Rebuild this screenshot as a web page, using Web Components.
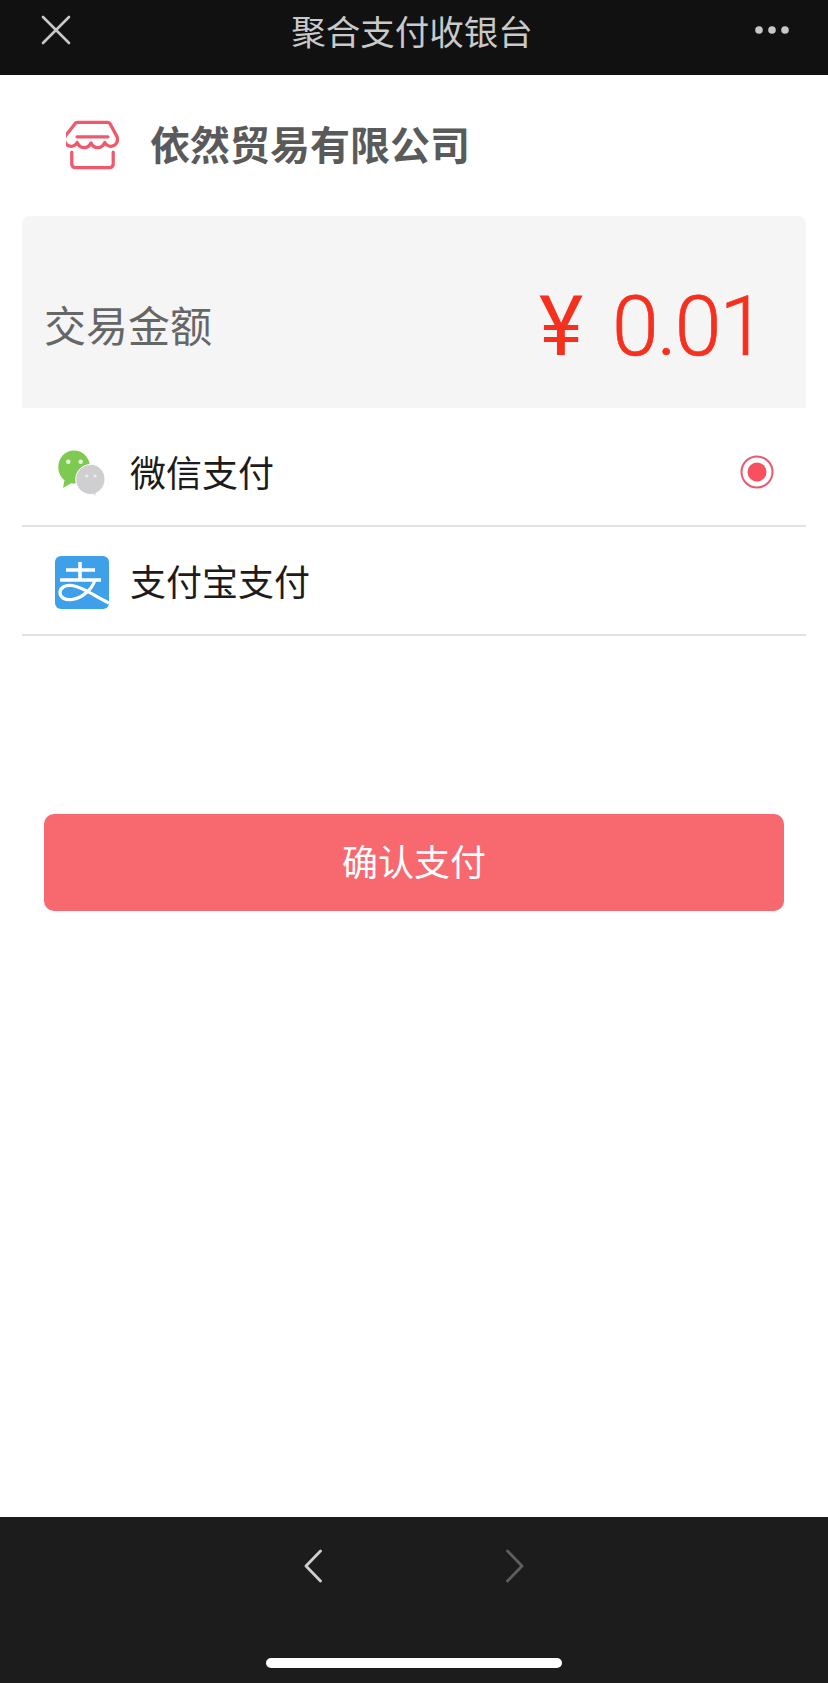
<!DOCTYPE html>
<html lang="zh">
<head>
<meta charset="utf-8">
<title>聚合支付收银台</title>
<style>
html, body {
    margin: 0;
    padding: 0;
    background: #fff;
}
body {
    font-family: "Noto Sans CJK SC", "Noto Sans", sans-serif;
}
.page {
    display: flex;
    flex-direction: column;
    height: 1683px;
}
</style>
</head>
<body>
<div class="page">
    <pay-titlebar>聚合支付收银台</pay-titlebar>
    <pay-merchant>依然贸易有限公司</pay-merchant>
    <pay-amount label="交易金额" value="0.01"></pay-amount>
    <pay-method selected>
        <svg slot="icon" width="48" height="48" viewBox="0 0 48 48">
            <path fill="#7ec94f" d="M16 .5C7.200.5.300 7.800.300 17c0 5.400 2.400 10.200 6.200 13.200L5 38l8-4.700c1 .2 2 .3 3 .3 8.800 0 16-7.500 16-16.600S24.800.5 16 .5z"/>
            <circle cx="10.300" cy="11.700" r="2.300" fill="#e6f5dc"/>
            <circle cx="22.700" cy="11.700" r="2.300" fill="#e6f5dc"/>
            <path fill="#cfcfd1" stroke="#fff" stroke-width="1" d="M32.500 14.500c-8 0-14.800 6.600-14.800 15 0 8.300 6.800 15 14.800 15 1 0 1.900-.1 2.800-.3l3 2.300-.5-3.300c5.400-2.300 9.200-7.600 9.200-14 0-8.400-6.500-15-14.500-15z"/>
            <circle cx="28.700" cy="26" r="1.600" fill="#ececec"/>
            <circle cx="37" cy="26" r="1.600" fill="#ececec"/>
        </svg>
        微信支付
    </pay-method>
    <pay-method>
        <svg slot="icon" width="54" height="53" viewBox="0 0 54 53">
            <rect width="54" height="53" rx="6" fill="#3fa0ea"/>
            <g fill="none" stroke="#fff" stroke-width="3.600">
                <path d="M11 14h29M5 24h41M25 6v18"/>
                <path stroke-width="3.200" d="M40 24c-3 9-12 18-23 19.500C10 44.500 5 41.500 5 36.500c0-5 5.500-8 12-7 12 1.800 22 10.500 37 17.500"/>
            </g>
        </svg>
        支付宝支付
    </pay-method>
    <pay-button>确认支付</pay-button>
    <pay-navbar></pay-navbar>
</div>

<script>
class PayTitlebar extends HTMLElement {
    constructor() {
        super();
        this.attachShadow({ mode: 'open' });
    }

    connectedCallback() {
        this.shadowRoot.innerHTML = `
            <style>
            :host {
                display: grid;
                grid-template-columns: 1fr auto 1fr;
                align-items: center;
                height: 75px;
                padding: 0 39px 15px 41px;
                box-sizing: border-box;
                background: #111;
                color: #c9c9c9;
                font-size: 34.500px;
                line-height: 60px;
            }
            .close { display: block; }
            .title { margin-right: 6px; }
            .more { display: block; justify-self: end; }
            </style>
            <svg class="close" width="30" height="30" viewBox="0 0 30 30" fill="none" stroke="#c8c8c8" stroke-width="2.600" stroke-linecap="round">
                <path d="M2 2l26 26M28 2L2 28"/>
            </svg>
            <span class="title"><slot></slot></span>
            <svg class="more" width="34" height="8" viewBox="0 0 34 8" fill="#c8c8c8">
                <circle cx="4" cy="4" r="3.800"/>
                <circle cx="17" cy="4" r="3.800"/>
                <circle cx="30" cy="4" r="3.800"/>
            </svg>
        `;
    }
}

class PayMerchant extends HTMLElement {
    constructor() {
        super();
        this.attachShadow({ mode: 'open' });
    }

    connectedCallback() {
        this.shadowRoot.innerHTML = `
            <style>
            :host {
                display: flex;
                align-items: center;
                gap: 31px;
                height: 141px;
                padding-left: 66px;
                color: #5a5a5a;
                font-size: 40px;
                font-weight: 700;
            }
            svg { display: block; flex: none; margin-bottom: 2px; }
            .name { margin-bottom: 6px; }
            </style>
            <svg width="53" height="50" viewBox="0 0 55 51" fill="none" stroke="#f0596b" stroke-width="3.400" stroke-linecap="round" stroke-linejoin="round">
                <path d="M12 2h31c1.500 0 2.500.8 3 2l6.500 12c1.500 3 1.200 6-.8 8.500-2 2.500-6 3.200-9 1.200-1.200-.8-2-1.800-2.400-2.800-1.800 3.800-4.800 5.300-7.400 5.300-3 0-5.500-1.500-7-4.800-1.500 3.300-4 4.800-7 4.800-2.600 0-5.600-1.500-7.400-5.300-.4 1-1.200 2-2.400 2.800-3 2-7 1.300-9-1.200-2-2.500-2.300-5.500-.8-8.500L9 4c.5-1.200 1.500-2 3-2z"/>
                <path d="M11.500 17h32"/>
                <path d="M6 33v12c0 2.500 1.500 4 4 4h35c2.500 0 4-1.500 4-4V33"/>
            </svg>
            <span class="name"><slot></slot></span>
        `;
    }
}

class PayAmount extends HTMLElement {
    constructor() {
        super();
        this.attachShadow({ mode: 'open' });
    }

    connectedCallback() {
        this.shadowRoot.innerHTML = `
            <style>
            :host {
                display: flex;
                align-items: center;
                justify-content: space-between;
                height: 192px;
                margin: 0 22px 10px;
                padding: 23px 42px 0 22px;
                box-sizing: border-box;
                background: #f5f5f5;
                border-radius: 8px 8px 0 0;
            }
            .label {
                color: #666;
                font-size: 42px;
            }
            .price {
                display: flex;
                align-items: center;
                gap: 29px;
                margin-top: 6px;
                color: #f5301f;
                font-family: Roboto, "Liberation Sans", sans-serif;
                font-weight: 300;
                -webkit-text-stroke: 0.7px #f5301f;
                font-size: 84px;
                line-height: 100px;
                letter-spacing: -2px;
            }
            .yen {
                font-weight: 400;
                -webkit-text-stroke: 0;
                letter-spacing: 0;
            }
            </style>
            <span class="label">${this.getAttribute('label')}</span>
            <span class="price"><span class="yen">¥</span><span>${this.getAttribute('value')}</span></span>
        `;
    }
}

class PayMethod extends HTMLElement {
    constructor() {
        super();
        this.attachShadow({ mode: 'open' });
    }

    connectedCallback() {
        const radio = this.hasAttribute('selected') ? `
            <svg class="radio" width="34" height="34" viewBox="0 0 34 34">
                <circle cx="17" cy="17" r="15.500" fill="none" stroke="#e85a70" stroke-width="2"/>
                <circle cx="17" cy="17" r="9.500" fill="#f8505f"/>
            </svg>` : '';
        this.shadowRoot.innerHTML = `
            <style>
            :host {
                display: flex;
                align-items: center;
                height: 109px;
                margin: 0 22px;
                padding: 0 32px 0 33px;
                box-sizing: border-box;
                border-bottom: 2px solid #e2e2e2;
                color: #1c1c1c;
                font-size: 36px;
            }
            .icon {
                display: flex;
                justify-content: center;
                width: 54px;
                margin: 4px 21px 0 0;
            }
            .text { flex: 1; margin-bottom: 1px; }
            .radio { display: block; margin-top: 1px; }
            </style>
            <span class="icon"><slot name="icon"></slot></span>
            <span class="text"><slot></slot></span>
            ${radio}
        `;
    }
}

class PayButton extends HTMLElement {
    constructor() {
        super();
        this.attachShadow({ mode: 'open' });
    }

    connectedCallback() {
        this.shadowRoot.innerHTML = `
            <style>
            :host {
                display: flex;
                align-items: center;
                justify-content: center;
                height: 97px;
                margin: 178px 44px 0;
                padding-bottom: 6px;
                box-sizing: border-box;
                background: #f7696f;
                border-radius: 10px;
                color: #fff;
                font-size: 36px;
            }
            </style>
            <slot></slot>
        `;
    }
}

class PayNavbar extends HTMLElement {
    constructor() {
        super();
        this.attachShadow({ mode: 'open' });
    }

    connectedCallback() {
        this.shadowRoot.innerHTML = `
            <style>
            :host {
                display: flex;
                flex-direction: column;
                align-items: center;
                margin-top: auto;
                height: 166px;
                background: #1c1c1c;
            }
            .arrows {
                display: flex;
                gap: 184px;
                margin-top: 32px;
            }
            svg { display: block; }
            .home {
                width: 296px;
                height: 10px;
                margin-top: 75px;
                background: #fff;
                border-radius: 5px;
            }
            </style>
            <div class="arrows">
                <svg width="18" height="34" viewBox="0 0 18 34" fill="none" stroke="#cfcfcf" stroke-width="2.800" stroke-linecap="round" stroke-linejoin="round"><path d="M16.500 2L2 17l14.500 15"/></svg>
                <svg width="18" height="34" viewBox="0 0 18 34" fill="none" stroke="#5f5f5f" stroke-width="2.800" stroke-linecap="round" stroke-linejoin="round"><path d="M1.500 2L16 17 1.500 32"/></svg>
            </div>
            <div class="home"></div>
        `;
    }
}

customElements.define('pay-titlebar', PayTitlebar);
customElements.define('pay-merchant', PayMerchant);
customElements.define('pay-amount', PayAmount);
customElements.define('pay-method', PayMethod);
customElements.define('pay-button', PayButton);
customElements.define('pay-navbar', PayNavbar);
</script>
</body>
</html>
